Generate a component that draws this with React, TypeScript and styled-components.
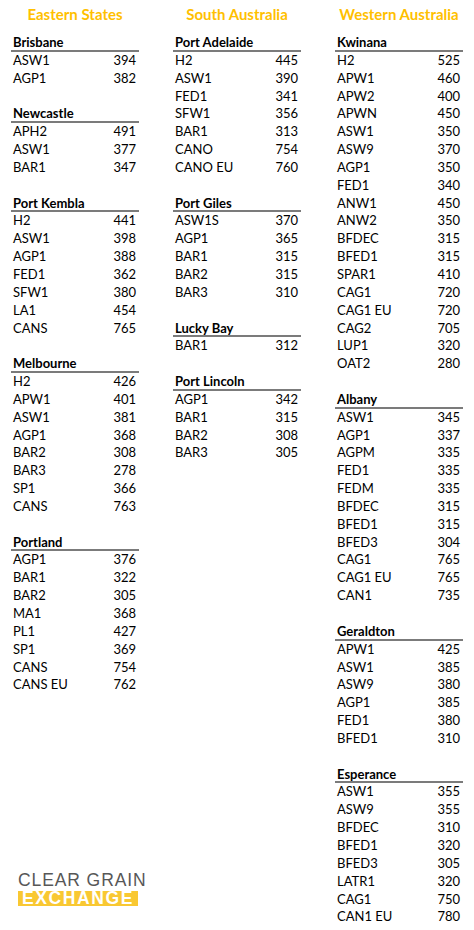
import styled, { createGlobalStyle } from "styled-components";

type Grade = [string, number];

interface Port {
  name: string;
  grades: Grade[];
}

interface Region {
  title: string;
  ports: Port[];
}

const regions: Region[] = [
  {
    title: "Eastern States",
    ports: [
      { name: "Brisbane", grades: [["ASW1", 394], ["AGP1", 382]] },
      { name: "Newcastle", grades: [["APH2", 491], ["ASW1", 377], ["BAR1", 347]] },
      {
        name: "Port Kembla",
        grades: [["H2", 441], ["ASW1", 398], ["AGP1", 388], ["FED1", 362], ["SFW1", 380], ["LA1", 454], ["CANS", 765]],
      },
      {
        name: "Melbourne",
        grades: [["H2", 426], ["APW1", 401], ["ASW1", 381], ["AGP1", 368], ["BAR2", 308], ["BAR3", 278], ["SP1", 366], ["CANS", 763]],
      },
      {
        name: "Portland",
        grades: [["AGP1", 376], ["BAR1", 322], ["BAR2", 305], ["MA1", 368], ["PL1", 427], ["SP1", 369], ["CANS", 754], ["CANS EU", 762]],
      },
    ],
  },
  {
    title: "South Australia",
    ports: [
      {
        name: "Port Adelaide",
        grades: [["H2", 445], ["ASW1", 390], ["FED1", 341], ["SFW1", 356], ["BAR1", 313], ["CANO", 754], ["CANO EU", 760]],
      },
      { name: "Port Giles", grades: [["ASW1S", 370], ["AGP1", 365], ["BAR1", 315], ["BAR2", 315], ["BAR3", 310]] },
      { name: "Lucky Bay", grades: [["BAR1", 312]] },
      { name: "Port Lincoln", grades: [["AGP1", 342], ["BAR1", 315], ["BAR2", 308], ["BAR3", 305]] },
    ],
  },
  {
    title: "Western Australia",
    ports: [
      {
        name: "Kwinana",
        grades: [
          ["H2", 525], ["APW1", 460], ["APW2", 400], ["APWN", 450], ["ASW1", 350], ["ASW9", 370],
          ["AGP1", 350], ["FED1", 340], ["ANW1", 450], ["ANW2", 350], ["BFDEC", 315], ["BFED1", 315],
          ["SPAR1", 410], ["CAG1", 720], ["CAG1 EU", 720], ["CAG2", 705], ["LUP1", 320], ["OAT2", 280],
        ],
      },
      {
        name: "Albany",
        grades: [
          ["ASW1", 345], ["AGP1", 337], ["AGPM", 335], ["FED1", 335], ["FEDM", 335], ["BFDEC", 315],
          ["BFED1", 315], ["BFED3", 304], ["CAG1", 765], ["CAG1 EU", 765], ["CAN1", 735],
        ],
      },
      {
        name: "Geraldton",
        grades: [["APW1", 425], ["ASW1", 385], ["ASW9", 380], ["AGP1", 385], ["FED1", 380], ["BFED1", 310]],
      },
      {
        name: "Esperance",
        grades: [["ASW1", 355], ["ASW9", 355], ["BFDEC", 310], ["BFED1", 320], ["BFED3", 305], ["LATR1", 320], ["CAG1", 750], ["CAN1 EU", 780]],
      },
    ],
  },
];

// spreadsheet row height
const ROW = 17.85;

const GlobalStyle = createGlobalStyle`
  body {
    margin: 0;
    background: #ffffff;
    font-family: Lato, "Open Sans", sans-serif;
    color: #000000;
  }
`;

const App = () => {
  return (
    <>
      <GlobalStyle />
      <Page>
        {regions.map((region, i) => (
          <Column key={region.title}>
            <RegionTitle>{region.title}</RegionTitle>
            {region.ports.map((port) => (
              <Section key={port.name}>
                <PortName>{port.name}</PortName>
                {port.grades.map(([grade, price]) => (
                  <Row key={grade}>
                    <span>{grade}</span>
                    <span>{price}</span>
                  </Row>
                ))}
              </Section>
            ))}
            {i === 0 && (
              <Logo>
                <LogoTop>CLEAR GRAIN</LogoTop>
                <LogoBottom>EXCHANGE</LogoBottom>
              </Logo>
            )}
          </Column>
        ))}
      </Page>
    </>
  );
};

export default App;

const Page = styled.div`
  display: grid;
  grid-template-columns: repeat(3, 128px);
  column-gap: 34px;
  padding-left: 11px;
  height: 930px;
  box-sizing: border-box;
  overflow: hidden;
`;

const Column = styled.div`
  display: flex;
  flex-direction: column;
  min-height: 0;
`;

const RegionTitle = styled.h2`
  margin: 0;
  height: 34px;
  padding-bottom: 6px;
  box-sizing: border-box;
  line-height: 28px;
  text-align: center;
  font-size: 15px;
  font-weight: 700;
  color: #ffc000;
  white-space: nowrap;
`;

const Section = styled.section`
  margin-bottom: ${ROW}px;

  &:last-of-type {
    margin-bottom: 0;
  }
`;

const PortName = styled.div`
  height: ${ROW}px;
  box-sizing: border-box;
  padding: 0 2px;
  line-height: ${ROW - 1}px;
  font-size: 13px;
  font-weight: 700;
  border-bottom: 2px solid #7b7b7b;
`;

const Row = styled.div`
  display: flex;
  justify-content: space-between;
  height: ${ROW}px;
  padding: 0 3px 0 2px;
  line-height: ${ROW}px;
  font-size: 13px;
`;

const Logo = styled.div`
  margin-top: auto;
  margin-bottom: 24px;
  margin-left: 7px;
  width: 120px;
  display: flex;
  flex-direction: column;
`;

const LogoTop = styled.div`
  font-family: "Liberation Sans", sans-serif;
  font-size: 17.5px;
  line-height: 16px;
  letter-spacing: 0.9px;
  color: #575757;
  white-space: nowrap;
  margin-bottom: 3px;
`;

const LogoBottom = styled.div`
  background: #f9c832;
  color: #ffffff;
  font-family: "Liberation Sans", sans-serif;
  font-weight: 700;
  font-size: 17.5px;
  line-height: 15px;
  letter-spacing: 1.6px;
  white-space: nowrap;
  text-align: center;
`;
